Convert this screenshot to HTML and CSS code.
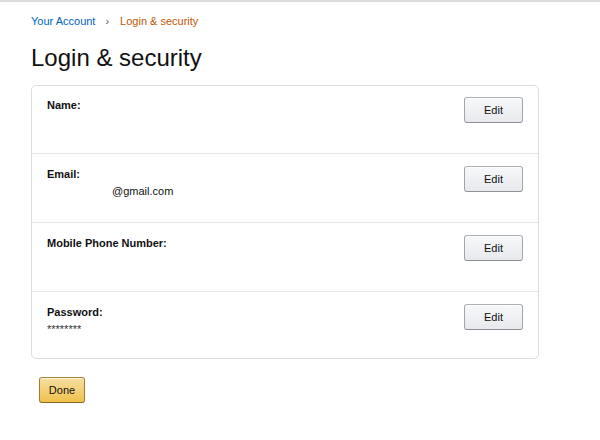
FILE: index.html
```html
<!DOCTYPE html>
<html>
<head>
<meta charset="utf-8">
<link rel="stylesheet" href="styles.css">
</head>
<body>
<div class="page">
  <nav class="crumbs">
    <a class="crumb-link" href="#">Your Account</a>
    <span class="crumb-sep">›</span>
    <span class="crumb-current">Login &amp; security</span>
  </nav>
  <h1 class="title">Login &amp; security</h1>
  <div class="card">
    <div class="row">
      <div class="info">
        <div class="label">Name:</div>
      </div>
      <button class="btn">Edit</button>
    </div>
    <div class="row">
      <div class="info">
        <div class="label">Email:</div>
        <div class="value"><span class="redacted"></span>@gmail.com</div>
      </div>
      <button class="btn">Edit</button>
    </div>
    <div class="row">
      <div class="info">
        <div class="label">Mobile Phone Number:</div>
      </div>
      <button class="btn">Edit</button>
    </div>
    <div class="row">
      <div class="info">
        <div class="label">Password:</div>
        <div class="value secret">********</div>
      </div>
      <button class="btn">Edit</button>
    </div>
  </div>
  <div class="actions">
    <button class="btn btn-primary">Done</button>
  </div>
</div>
</body>
</html>
```

FILE: styles.css
```css
html, body {
  margin: 0;
  padding: 0;
  background: #fff;
}
body {
  border-top: 2px solid #dcdcdc;
  font-family: "Liberation Sans", Arial, sans-serif;
  color: #111;
}
.page {
  padding: 12px 0 0 31px;
  width: 508px;
}
.crumbs {
  display: flex;
  align-items: center;
  font-size: 11px;
  line-height: 14px;
}
.crumb-link {
  color: #0066c0;
  text-decoration: none;
}
.crumb-sep {
  color: #555;
  margin: 0 11px 0 10px;
}
.crumb-current {
  color: #c45500;
}
.title {
  margin: 15px 0 13px 0;
  font-size: 24px;
  line-height: 29px;
  font-weight: 400;
  color: #111;
}
.card {
  border: 1px solid #dddddd;
  border-radius: 5px;
}
.row {
  display: flex;
  justify-content: space-between;
  align-items: flex-start;
  height: 69px;
  box-sizing: border-box;
  padding: 12px 15px 0 15px;
  border-top: 1px solid #e7e7e7;
}
.row:first-child {
  border-top: none;
  height: 67px;
  padding-top: 11px;
}
.row:last-child {
  height: 67px;
}
.label {
  font-size: 11px;
  line-height: 17px;
  font-weight: 700;
}
.value {
  font-size: 11px;
  line-height: 17px;
}
.secret {
  color: #333;
}
.redacted {
  display: inline-block;
  width: 65px;
}
.btn {
  font-family: "Liberation Sans", Arial, sans-serif;
  font-size: 11px;
  color: #111;
  height: 26px;
  width: 59px;
  padding: 0;
  border: 1px solid;
  border-color: #adb1b8 #a2a6ac #8d9096;
  border-radius: 3px;
  background: linear-gradient(to bottom, #f7f8fa, #e7e9ec);
  box-shadow: 0 1px 0 rgba(255,255,255,.6) inset;
}
.actions {
  padding: 18px 0 0 8px;
}
.btn-primary {
  width: 46px;
  border-color: #a88734 #9c7e31 #846a29;
  background: linear-gradient(to bottom, #f7dfa5, #f0c14b);
}
```
